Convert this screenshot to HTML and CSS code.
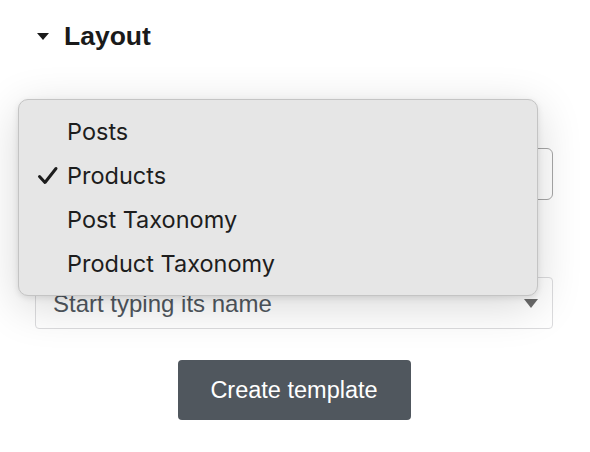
FILE: index.html
```html
<!DOCTYPE html>
<html lang="en">

<head>
    <meta charset="UTF-8">
    <title>Layout</title>

    <link rel="stylesheet" href="styles.css">
</head>

<body>
    <div class="panel">
        <h2 class="section-title">
            <span class="caret"></span>
            Layout
        </h2>

        <div class="select select-type">
            <span class="select-mark"></span>
        </div>

        <div class="select select-search">
            <span class="placeholder">Start typing its name</span>
            <span class="arrow"></span>
        </div>

        <div class="actions">
            <button class="button">Create template</button>
        </div>
    </div>

    <ul class="menu">
        <li>Posts</li>
        <li class="checked">
            <svg class="check" width="22" height="20" viewBox="0 0 22 20">
                <path d="M2.5 10.5 L8 16.5 L19 2.5" fill="none" stroke="#1d1d1d" stroke-width="3"
                    stroke-linecap="round" stroke-linejoin="round" />
            </svg>
            Products
        </li>
        <li>Post Taxonomy</li>
        <li>Product Taxonomy</li>
    </ul>
</body>

</html>
```

FILE: styles.css
```css
body {
    font-family: "Liberation Sans", Arial, sans-serif;
    background-color: #fff;
    margin: 0;
    width: 590px;
    height: 452px;
    overflow: hidden;
}

.panel {
    margin-left: 35px;
    width: 518px;
}

.section-title {
    display: flex;
    align-items: center;
    margin: 21px 0 0 2px;
    font-size: 26.5px;
    line-height: 30px;
    font-weight: bold;
    color: #1a1a1a;
}

.caret {
    width: 0;
    height: 0;
    border-left: 6.5px solid transparent;
    border-right: 6.5px solid transparent;
    border-top: 7px solid #1a1a1a;
    margin-right: 15px;
    margin-top: 1px;
}

.select {
    box-sizing: border-box;
    height: 52px;
    border-radius: 4px;
    display: flex;
    align-items: center;
    justify-content: space-between;
    padding: 0 14px 0 17px;
    font-size: 24px;
}

.select-type {
    margin-top: 97px;
    border: 1.5px solid #a7a7a7;
    border-radius: 6px;
    justify-content: flex-end;
}

.select-mark {
    width: 4px;
    height: 4px;
    border-radius: 2px;
    background-color: #444;
}

.select-search {
    margin-top: 77px;
    height: 52px;
    border: 1px solid #dcdcde;
}

.placeholder {
    color: #50575e;
    margin-top: 2px;
}

.arrow {
    width: 0;
    height: 0;
    border-left: 7.5px solid transparent;
    border-right: 7.5px solid transparent;
    border-top: 9px solid #6b6b6b;
}

.actions {
    display: flex;
    justify-content: center;
    margin-top: 31px;
}

.button {
    width: 233px;
    height: 60px;
    border: none;
    border-radius: 4px;
    background-color: #50575e;
    color: #fff;
    font-family: "Liberation Sans", Arial, sans-serif;
    font-size: 23.5px;
    padding: 0;
}

/* popup list, sits over the form */
.menu {
    position: absolute;
    left: 18px;
    top: 99px;
    box-sizing: border-box;
    width: 520px;
    height: 197px;
    margin: 0;
    padding: 10px 0 0 0;
    list-style: none;
    background-color: #e6e6e6;
    border: 1px solid #c4c4c4;
    border-radius: 10px;
    box-shadow: 0px 10px 45px rgba(0, 0, 0, 0.16), 0px 2px 6px rgba(0, 0, 0, 0.1);
    font-family: Inter, "Liberation Sans", sans-serif;
    font-size: 23.5px;
    color: #1d1d1d;
}

.menu li {
    position: relative;
    height: 44px;
    line-height: 44px;
    padding-left: 48px;
}

.check {
    position: absolute;
    left: 18px;
    top: 12px;
}
```
